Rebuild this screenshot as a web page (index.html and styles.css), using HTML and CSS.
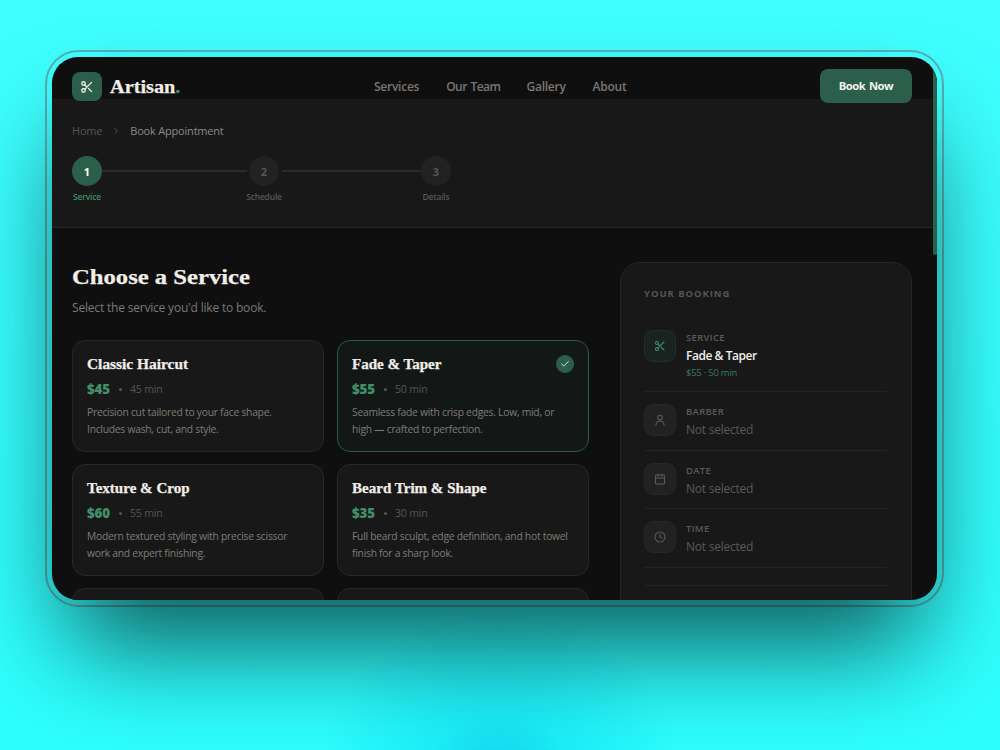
FILE: index.html
```html
<!DOCTYPE html>
<html lang="en">
<head>
<meta charset="utf-8">
<title>Artisan. Book Appointment</title>
<link rel="stylesheet" href="styles.css">
</head>
<body>
<svg class="defs" width="0" height="0">
  <symbol id="scissors" viewBox="0 0 24 24"><circle cx="6" cy="6" r="3"/><circle cx="6" cy="18" r="3"/><path d="M20 4 8.12 15.88M14.47 14.48 20 20M8.12 8.12 12 12"/></symbol>
  <symbol id="user" viewBox="0 0 24 24"><circle cx="12" cy="7" r="4.500"/><path d="M4 22v-1a8 7 0 0 1 16 0v1"/></symbol>
  <symbol id="calendar" viewBox="0 0 24 24"><rect x="3" y="4" width="18" height="18" rx="2"/><path d="M16 2v4M8 2v4M3 10h18"/></symbol>
  <symbol id="clock" viewBox="0 0 24 24"><circle cx="12" cy="12" r="10"/><path d="M12 6v6l4 2"/></symbol>
</svg>
<div class="frame">
<main class="window">
  <header class="nav">
    <div class="brand"><span class="logo"><svg><use href="#scissors"/></svg></span><span class="brand-name">Artisan<i>.</i></span></div>
    <nav class="links"><a>Services</a><a class="team">Our Team</a><a>Gallery</a><a>About</a></nav>
    <button class="book">Book Now</button>
  </header>
  <section class="top">
    <div class="crumbs"><span>Home</span><svg viewBox="0 0 24 24"><path d="m9 18 6-6-6-6"/></svg><b>Book Appointment</b></div>
    <div class="steps">
      <div class="step active"><span class="num">1</span><span class="label">Service</span></div>
      <div class="line first"></div>
      <div class="step"><span class="num">2</span><span class="label">Schedule</span></div>
      <div class="line second"></div>
      <div class="step"><span class="num">3</span><span class="label">Details</span></div>
    </div>
  </section>
  <section class="content">
    <div class="services">
      <h1><span>Choose a Service</span></h1>
      <p class="sub">Select the service you'd like to book.</p>
      <div class="grid">
        <article class="card"><h2><span>Classic Haircut</span></h2><div class="meta"><b>$45</b><i></i><span>45 min</span></div><p>Precision cut tailored to your face shape.<br>Includes wash, cut, and style.</p></article>
        <article class="card selected"><h2><span>Fade &amp; Taper</span></h2><div class="meta"><b>$55</b><i></i><span>50 min</span></div><p>Seamless fade with crisp edges. Low, mid, or<br>high — crafted to perfection.</p><span class="check"><svg viewBox="0 0 24 24"><path d="M20 6 9 17l-5-5"/></svg></span></article>
        <article class="card"><h2><span>Texture &amp; Crop</span></h2><div class="meta"><b>$60</b><i></i><span>55 min</span></div><p>Modern textured styling with precise scissor<br>work and expert finishing.</p></article>
        <article class="card"><h2><span>Beard Trim &amp; Shape</span></h2><div class="meta"><b>$35</b><i></i><span>30 min</span></div><p>Full beard sculpt, edge definition, and hot towel<br>finish for a sharp look.</p></article>
        <article class="card"></article>
        <article class="card"></article>
      </div>
    </div>
    <aside class="booking">
      <h3>YOUR BOOKING</h3>
      <div class="row chosen"><span class="ico"><svg><use href="#scissors"/></svg></span><div><small>SERVICE</small><strong>Fade &amp; Taper</strong><em>$55 · 50 min</em></div></div>
      <div class="row"><span class="ico"><svg><use href="#user"/></svg></span><div><small>BARBER</small><span class="none">Not selected</span></div></div>
      <div class="row"><span class="ico"><svg><use href="#calendar"/></svg></span><div><small>DATE</small><span class="none">Not selected</span></div></div>
      <div class="row"><span class="ico"><svg><use href="#clock"/></svg></span><div><small>TIME</small><span class="none">Not selected</span></div></div>
      <div class="rule"></div>
    </aside>
  </section>
  <div class="scrollbar"></div>
</main>
</div>
</body>
</html>
```
FILE: styles.css
```css
* { box-sizing: border-box; margin: 0; }
body {
  height: 750px; overflow: hidden; padding: 50px 0 0 45px;
  font-family: "Open Sans", "Noto Sans", sans-serif;
  background: radial-gradient(circle at 500px 800px, #14dcf2 0, #16def3 50px, #1cf0fa 85px, #2dffff00 190px), linear-gradient(#40ffff, #2dffff);
}
svg { fill: none; stroke: currentColor; stroke-width: 2.2; stroke-linecap: round; stroke-linejoin: round; display: block; }
.defs { position: absolute; }
.frame { width: 899px; height: 557px; padding: 5px; border: 2px solid rgba(110,100,105,.5); border-radius: 34px; }
.window {
  position: relative; width: 885px; height: 543px; overflow: hidden;
  border-radius: 26px; background: #0f0f0f; color: #f2eee8;
  box-shadow: 0 62px 105px -16px rgba(0,0,0,.66);
}
.nav { height: 42px; padding: 12px 25px 0 20px; display: flex; align-items: flex-start; justify-content: space-between; position: relative; z-index: 2; }
.brand { display: flex; align-items: center; gap: 9px; padding-top: 3px; width: 302px; }
.logo { width: 30px; height: 29px; border-radius: 8px; background: #2b5f4b; display: grid; place-items: center; flex: none; }
.logo svg { width: 14px; height: 14px; }
.brand-name, h1, h2 { font-family: "Liberation Serif", serif; font-weight: 700; white-space: nowrap; -webkit-text-stroke: .25px currentColor; }
.brand-name { font-size: 19.500px; line-height: 29px; display: inline-block; transform: scaleX(1.04); transform-origin: left; margin-left: -1px; }
.brand-name i { color: #419069; font-style: normal; }
.links { display: flex; gap: 27px; width: 446px; padding-top: 9px; font-size: 12px; line-height: 17px; font-weight: 600; letter-spacing: -.25px; color: #7a7772; white-space: nowrap; }
.team { letter-spacing: -.52px; word-spacing: 1px; margin-right: -1px; }
.book { width: 92px; height: 34px; border: 0; border-radius: 8px; background: #2b5f4b; color: #f4f2ee; font: 700 11.200px/34px "Open Sans", sans-serif; letter-spacing: -.4px; word-spacing: 1px; padding: 0; flex: none; }
.top { height: 129px; background: #181818; border-bottom: 1px solid #252525; padding: 23px 20px 0; }
.crumbs { display: flex; align-items: center; height: 17px; font-size: 11px; letter-spacing: -.2px; color: #555; }
.crumbs svg { width: 10px; height: 10px; margin: 0 9px; }
.crumbs b { font-weight: 400; color: #8c8984; }
.steps { display: flex; margin-top: 17px; }
.step { width: 30px; display: flex; flex-direction: column; align-items: center; color: #565656; }
.num { width: 30px; height: 30px; border-radius: 50%; background: #222; display: grid; place-items: center; font-size: 11px; font-weight: 700; }
.label { margin-top: 4px; font-size: 8.500px; line-height: 13px; font-weight: 600; letter-spacing: -.2px; }
.active .num { background: #2b5f4b; color: #fff; }
.active .label { color: #419069; }
.line { height: 2px; margin-top: 14px; background: #2a2a2a; }
.first { width: 145px; margin-right: 2px; }
.second { width: 139px; margin-left: 3px; }
.content { display: flex; justify-content: space-between; padding: 34px 25px 0 20px; }
.services { width: 517px; flex: none; }
h1 { height: 31px; font-size: 22px; line-height: 30px; }
h1 span { display: inline-block; transform: scaleX(1.12); transform-origin: left; }
h2 span { display: inline-block; transform: scaleX(1.075); transform-origin: left; }
.sub { height: 17px; margin-top: 6px; font-size: 12px; line-height: 17px; letter-spacing: -.19px; color: #7b7873; white-space: nowrap; }
.grid { display: grid; grid-template-columns: 252px 252px; grid-auto-rows: 112px; gap: 12px 13px; margin-top: 24px; }
.card { position: relative; border: 1px solid #282828; border-radius: 13px; background: #181818; padding: 15px 14px; }
.selected { border-color: #275c48; background: #131817; }
.card:first-child h2 span { transform: scaleX(1.1); }
h2 { height: 18px; font-size: 14px; line-height: 18px; }
.meta { display: flex; align-items: center; height: 18px; margin-top: 6px; font-size: 10.500px; letter-spacing: -.15px; color: #555; }
.meta b { font-size: 13.300px; font-weight: 800; color: #419069; width: 25px; }
.meta i { width: 3px; height: 3px; border-radius: 50%; background: #555; margin: 0 8px 0 7px; }
.card p { margin-top: 6px; font-size: 10.300px; line-height: 16.500px; letter-spacing: -.25px; color: #7f7c77; white-space: nowrap; }
.check { position: absolute; right: 14px; top: 14px; width: 18px; height: 18px; border-radius: 50%; background: #2b5f4b; display: grid; place-items: center; }
.check svg { width: 10px; height: 10px; }
.booking { width: 292px; height: 420px; flex: none; border: 1px solid #242424; border-radius: 20px; background: #181818; padding: 22px 24px 0 23px; }
h3 { height: 17px; font-size: 9.500px; line-height: 17px; letter-spacing: .95px; font-weight: 700; color: #555; }
.row { display: flex; gap: 10px; height: 58.500px; padding-top: 12px; border-bottom: 1px solid #242424; white-space: nowrap; }
.chosen { height: 74px; margin-top: 16px; }
.ico { width: 32px; height: 32px; border-radius: 9px; border: 1px solid #272727; background: #222; color: #5a5a5a; display: grid; place-items: center; flex: none; }
.ico svg { width: 12px; height: 12px; }
.chosen .ico { background: #1a2320; border-color: #1e3029; color: #419069; }
.row small { display: block; font-size: 9.500px; line-height: 14px; font-weight: 600; letter-spacing: .3px; color: #5a5a5a; padding-top: 1px; margin-bottom: -1px; }
.row strong { display: block; font-size: 12px; line-height: 17px; margin-top: 3px; font-weight: 600; letter-spacing: -.45px; }
.row em { display: block; font-style: normal; font-size: 9.500px; line-height: 14px; margin-top: 2px; letter-spacing: -.25px; color: #377a5a; }
.none { display: block; font-size: 12px; line-height: 17px; margin-top: 3px; letter-spacing: -.24px; color: #595959; }
.rule { height: 18px; border-bottom: 1px solid #242424; }
.scrollbar { position: absolute; right: 0; top: 0; width: 4px; height: 198px; background: #2b5f4b; border-radius: 2px; }
```
